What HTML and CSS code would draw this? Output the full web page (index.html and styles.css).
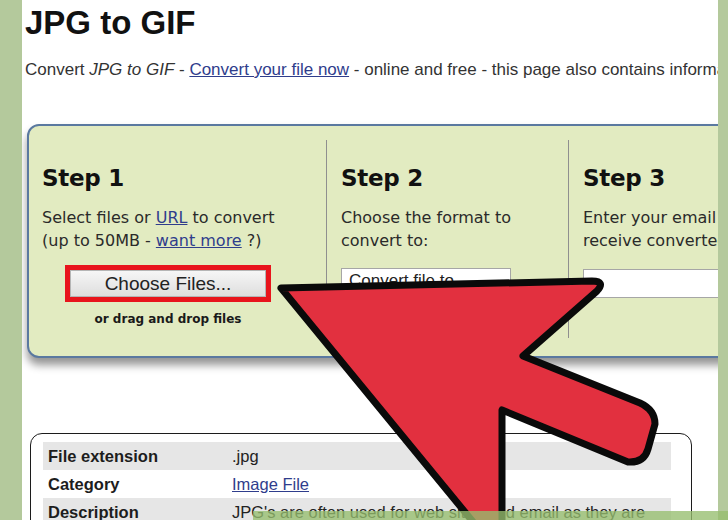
FILE: index.html
```html
<!DOCTYPE html>
<html>
<head>
<meta charset="utf-8">
<link rel="stylesheet" href="styles.css">
</head>
<body>
<div class="page">
  <h1 class="title">JPG to GIF</h1>
  <p class="intro">Convert <em>JPG to GIF</em> - <a href="#">Convert your file now</a> - online and free - this page also contains information</p>

  <div class="panel">
    <div class="steps">
      <div class="step step1">
        <h2 class="step-title">Step 1</h2>
        <p class="step-text">Select files or <a href="#">URL</a> to convert<br>(up to 50MB - <a href="#">want more</a> ?)</p>
        <div class="upload">
          <div class="choose-wrap"><button class="choose">Choose Files...</button></div>
          <div class="drop">or drag and drop files</div>
        </div>
      </div>
      <div class="step step2">
        <h2 class="step-title">Step 2</h2>
        <p class="step-text">Choose the format to<br>convert to:</p>
        <div class="select">Convert file to</div>
      </div>
      <div class="step step3">
        <h2 class="step-title">Step 3</h2>
        <p class="step-text">Enter your email address to<br>receive converted files:</p>
        <div class="email"></div>
      </div>
    </div>
  </div>

  <div class="info">
    <div class="row shade"><div class="label">File extension</div><div class="value">.jpg</div></div>
    <div class="row"><div class="label">Category</div><div class="value"><a href="#">Image File</a></div></div>
    <div class="row shade"><div class="label">Description</div><div class="value">JPG's are often used for web sites and email as they are</div></div>
  </div>
</div>

<svg class="arrow" width="728" height="520" viewBox="0 0 728 520" aria-hidden="true">
  <path d="M281,288 L592,281 Q606,281 597,291 L523,356 L640,403 Q655,410 655,424 L648,449 Q644,463 628,462 L502,410 L502,530 L492,545 Z"
        fill="#e2303f" stroke="#0a0a0a" stroke-width="7" stroke-linejoin="round"/>
</svg>
<div class="caption-strip"></div>
</body>
</html>
```

FILE: styles.css
```css
html, body {
  margin: 0;
  padding: 0;
}
body {
  width: 728px;
  height: 520px;
  overflow: hidden;
  background: #b4c99c;
  position: relative;
}
.page {
  margin-left: 22px;
  width: 696px;
  height: 520px;
  padding: 4px 0 0 3px;
  box-sizing: border-box;
  background: #ffffff;
  overflow: hidden;
  font-family: "Liberation Sans", Arial, sans-serif;
  color: #222;
}
.title {
  margin: 0;
  font-size: 33px;
  line-height: 38px;
  font-weight: bold;
  color: #111;
}
.intro {
  margin: 18px 0 0 0;
  font-size: 17px;
  line-height: 20px;
  white-space: nowrap;
  color: #333;
}
.intro a, .step-text a, .value a {
  color: #2f3d8c;
  text-decoration: underline;
}
.panel {
  margin: 44px 0 0 2px;
  width: 900px;
  box-sizing: border-box;
  border: 2px solid #5a79a0;
  border-radius: 12px;
  background: #e2ebc1;
  padding: 14px 0 18px 0;
  box-shadow: 0 7px 9px rgba(0, 0, 0, 0.42);
}
.steps {
  display: flex;
  height: 198px;
}
.step {
  box-sizing: border-box;
  padding-top: 25px;
  font-family: "DejaVu Sans", Verdana, sans-serif;
  color: #2a2a2a;
}
.step1 {
  width: 297px;
  padding-left: 13px;
}
.step2 {
  width: 242px;
  border-left: 1px solid #8f8f8f;
  padding-left: 14px;
}
.step3 {
  flex: 1;
  border-left: 1px solid #8f8f8f;
  padding-left: 14px;
}
.step-title {
  margin: 0;
  font-size: 23px;
  line-height: 26px;
  font-weight: bold;
  letter-spacing: -0.3px;
  color: #111;
}
.step-text {
  margin: 15px 0 0 0;
  font-size: 16px;
  line-height: 23px;
  white-space: nowrap;
}
.upload {
  width: 252px;
  margin-top: 13px;
  display: flex;
  flex-direction: column;
  align-items: center;
}
.choose-wrap {
  width: 206px;
  height: 37px;
  box-sizing: border-box;
  border: 5px solid #e8141c;
  display: flex;
}
.choose {
  flex: 1;
  margin: 0;
  border: 1px solid #b5b5b5;
  background: linear-gradient(#f6f6f6, #dedede);
  font-family: "Liberation Sans", Arial, sans-serif;
  font-size: 19px;
  color: #222;
  padding: 0;
}
.drop {
  margin-top: 9px;
  font-size: 12px;
  line-height: 16px;
  font-weight: bold;
  color: #1a1a1a;
}
.select {
  margin-top: 16px;
  width: 170px;
  height: 32px;
  box-sizing: border-box;
  border: 1px solid #a6a6a6;
  background: #fff;
  font-family: "Liberation Sans", Arial, sans-serif;
  font-size: 17px;
  line-height: 24px;
  padding-left: 7px;
  color: #222;
}
.email {
  margin-top: 17px;
  width: 260px;
  height: 29px;
  box-sizing: border-box;
  border: 1px solid #a6a6a6;
  background: #fff;
}
.info {
  margin: 75px 0 0 5px;
  width: 662px;
  box-sizing: border-box;
  border: 1.5px solid #1c1c1c;
  border-radius: 12px;
  padding: 8px 20px 10px 12px;
  font-size: 16.5px;
}
.row {
  display: grid;
  grid-template-columns: 184px 1fr;
  height: 28px;
  line-height: 28px;
}
.row.shade {
  background: #e6e6e6;
}
.label {
  padding-left: 5px;
  font-weight: bold;
  color: #1d1d1d;
}
.value {
  padding-left: 5px;
  white-space: nowrap;
  color: #222;
}
.arrow {
  position: absolute;
  left: 0;
  top: 0;
}
.caption-strip {
  position: absolute;
  left: 253px;
  top: 511px;
  width: 475px;
  height: 9px;
  background: rgba(150, 190, 110, 0.78);
}
```
